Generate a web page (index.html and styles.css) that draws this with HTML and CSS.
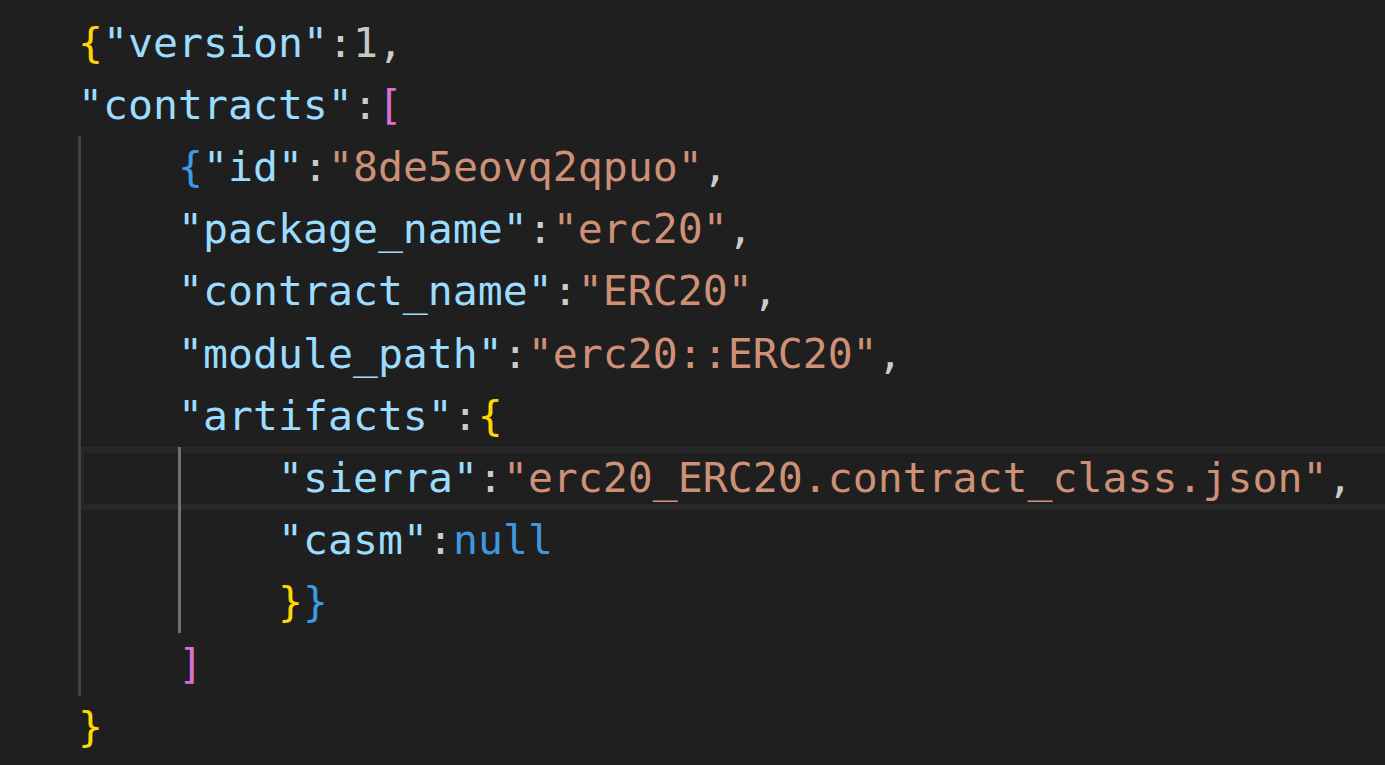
FILE: index.html
```html
<!DOCTYPE html>
<html>
<head>
<meta charset="utf-8">
<link rel="stylesheet" href="styles.css">
</head>
<body>
<div class="editor">
  <div class="line"><span class="code"><span class="b1">{</span><span class="k">"version"</span><span class="p">:</span><span class="n">1</span><span class="p">,</span></span></div>
  <div class="line"><span class="code"><span class="k">"contracts"</span><span class="p">:</span><span class="b2">[</span></span></div>
  <div class="line"><span class="guide"></span><span class="code"><span class="b3">{</span><span class="k">"id"</span><span class="p">:</span><span class="s">"8de5eovq2qpuo"</span><span class="p">,</span></span></div>
  <div class="line"><span class="guide"></span><span class="code"><span class="k">"package_name"</span><span class="p">:</span><span class="s">"erc20"</span><span class="p">,</span></span></div>
  <div class="line"><span class="guide"></span><span class="code"><span class="k">"contract_name"</span><span class="p">:</span><span class="s">"ERC20"</span><span class="p">,</span></span></div>
  <div class="line"><span class="guide"></span><span class="code"><span class="k">"module_path"</span><span class="p">:</span><span class="s">"erc20::ERC20"</span><span class="p">,</span></span></div>
  <div class="line"><span class="guide"></span><span class="code"><span class="k">"artifacts"</span><span class="p">:</span><span class="b1">{</span></span></div>
  <div class="line"><span class="guide bar"></span><div class="current"><span class="guide active"></span><span class="code"><span class="k">"sierra"</span><span class="p">:</span><span class="s">"erc20_ERC20.contract_class.json"</span><span class="p">,</span></span></div></div>
  <div class="line"><span class="guide"></span><span class="guide active"></span><span class="code"><span class="k">"casm"</span><span class="p">:</span><span class="c">null</span></span></div>
  <div class="line"><span class="guide"></span><span class="guide active"></span><span class="code"><span class="b1">}</span><span class="b3">}</span></span></div>
  <div class="line"><span class="guide"></span><span class="code"><span class="b2">]</span></span></div>
  <div class="line"><span class="code"><span class="b1">}</span></span></div>
</div>
</body>
</html>
```

FILE: styles.css
```css
html, body {
  margin: 0;
  padding: 0;
  background: #1f1f1f;
  overflow: hidden;
}

.editor {
  height: 765px;
  box-sizing: border-box;
  padding: 11.6px 0 0 78px;
  background: #1f1f1f;
  font-family: "DejaVu Sans Mono", "Liberation Mono", monospace;
  font-size: 41.5px;
  color: #cccccc;
}

.line {
  display: flex;
  height: 62.2px;
  align-items: stretch;
}

.code {
  white-space: pre;
  line-height: 62.2px;
}

.guide {
  flex: none;
  width: 100px;
  box-sizing: border-box;
  border-left: 3px solid #404040;
}

.guide.bar {
  width: 3px;
}

.guide.active {
  border-left-color: #707070;
}

.current {
  flex: 1;
  display: flex;
  align-items: stretch;
  padding-left: 97px;
  margin-bottom: -1px;
  box-shadow: inset 0 6px #282828, inset 0 -6px #282828, inset 3px 0 #282828;
}

.k { color: #9cdcfe; }
.s { color: #ce9178; }
.p { color: #cccccc; }
.n { color: #c6c8c2; }
.c { color: #3f98de; }
.b1 { color: #ffd700; }
.b2 { color: #da70d6; }
.b3 { color: #3b9be3; }
```
